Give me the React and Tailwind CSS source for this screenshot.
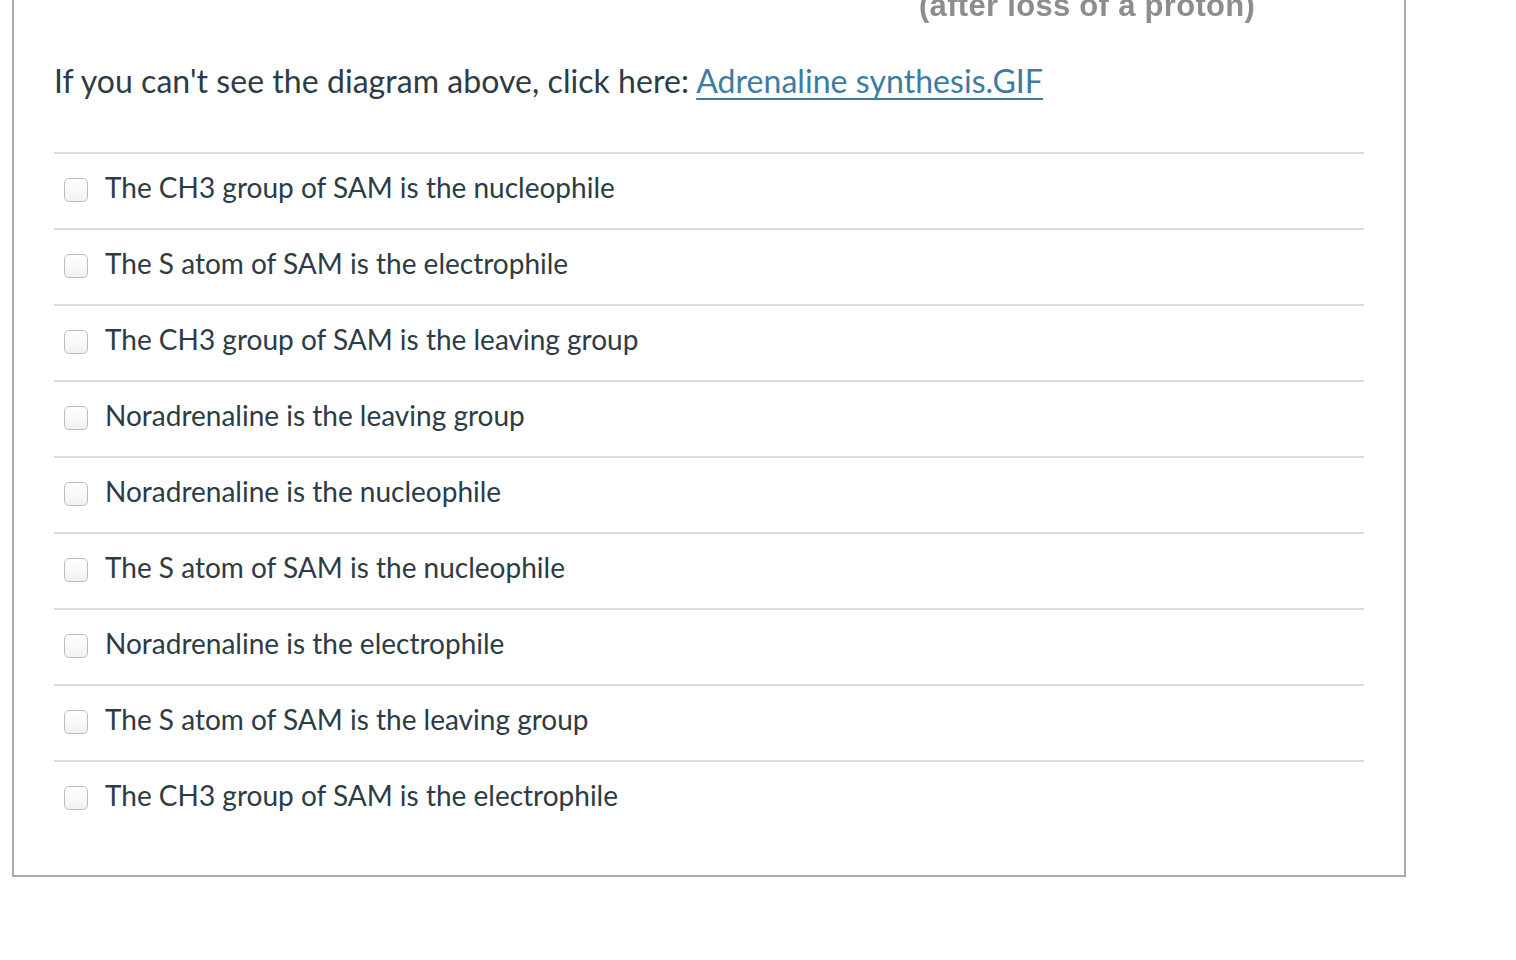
import React from 'react';

const options = [
  'The CH3 group of SAM is the nucleophile',
  'The S atom of SAM is the electrophile',
  'The CH3 group of SAM is the leaving group',
  'Noradrenaline is the leaving group',
  'Noradrenaline is the nucleophile',
  'The S atom of SAM is the nucleophile',
  'Noradrenaline is the electrophile',
  'The S atom of SAM is the leaving group',
  'The CH3 group of SAM is the electrophile',
];

export default function App() {
  return (
    <div className="w-[1516px] h-[960px] bg-white overflow-hidden" style={{ fontFamily: 'Lato, "Open Sans", sans-serif' }}>
      <div className="ml-[12px] w-[1394px] border-2 border-t-0 border-[#aaaaaa] px-[40px] pb-[39px]">
        {/* bottom edge of the diagram image */}
        <div className="h-[24px] overflow-hidden relative">
          <div
            className="absolute left-[865px] top-[-10px] text-[31px] font-bold text-[#8d8d8d] leading-none tracking-[0.3px] blur-[0.4px]"
            style={{ fontFamily: '"Liberation Sans", Arial, sans-serif' }}
          >
            (after loss of a proton)
          </div>
        </div>
        <p className="mt-[37px] text-[32px] leading-[40px] tracking-[0.05px] text-[#2d3b45]">
          If you can't see the diagram above, click here:{' '}
          <a href="#" className="text-[#3d7ca2] underline decoration-[2px] underline-offset-[5px]">
            Adrenaline synthesis.GIF
          </a>
        </p>
        <div className="mt-[51px]">
          {options.map((opt) => (
            <label key={opt} className="flex items-center h-[76px] border-t-2 border-[#dddddd] cursor-pointer">
              <span className="ml-[10px] mb-[2px] w-[24px] h-[24px] rounded-[5px] border border-[#bcbcbc] bg-gradient-to-b from-white to-[#f2f2f2] shrink-0"></span>
              <span className="ml-[17px] mb-[8px] text-[28px] text-[#2d3b45] leading-none">{opt}</span>
            </label>
          ))}
        </div>
      </div>
    </div>
  );
}
